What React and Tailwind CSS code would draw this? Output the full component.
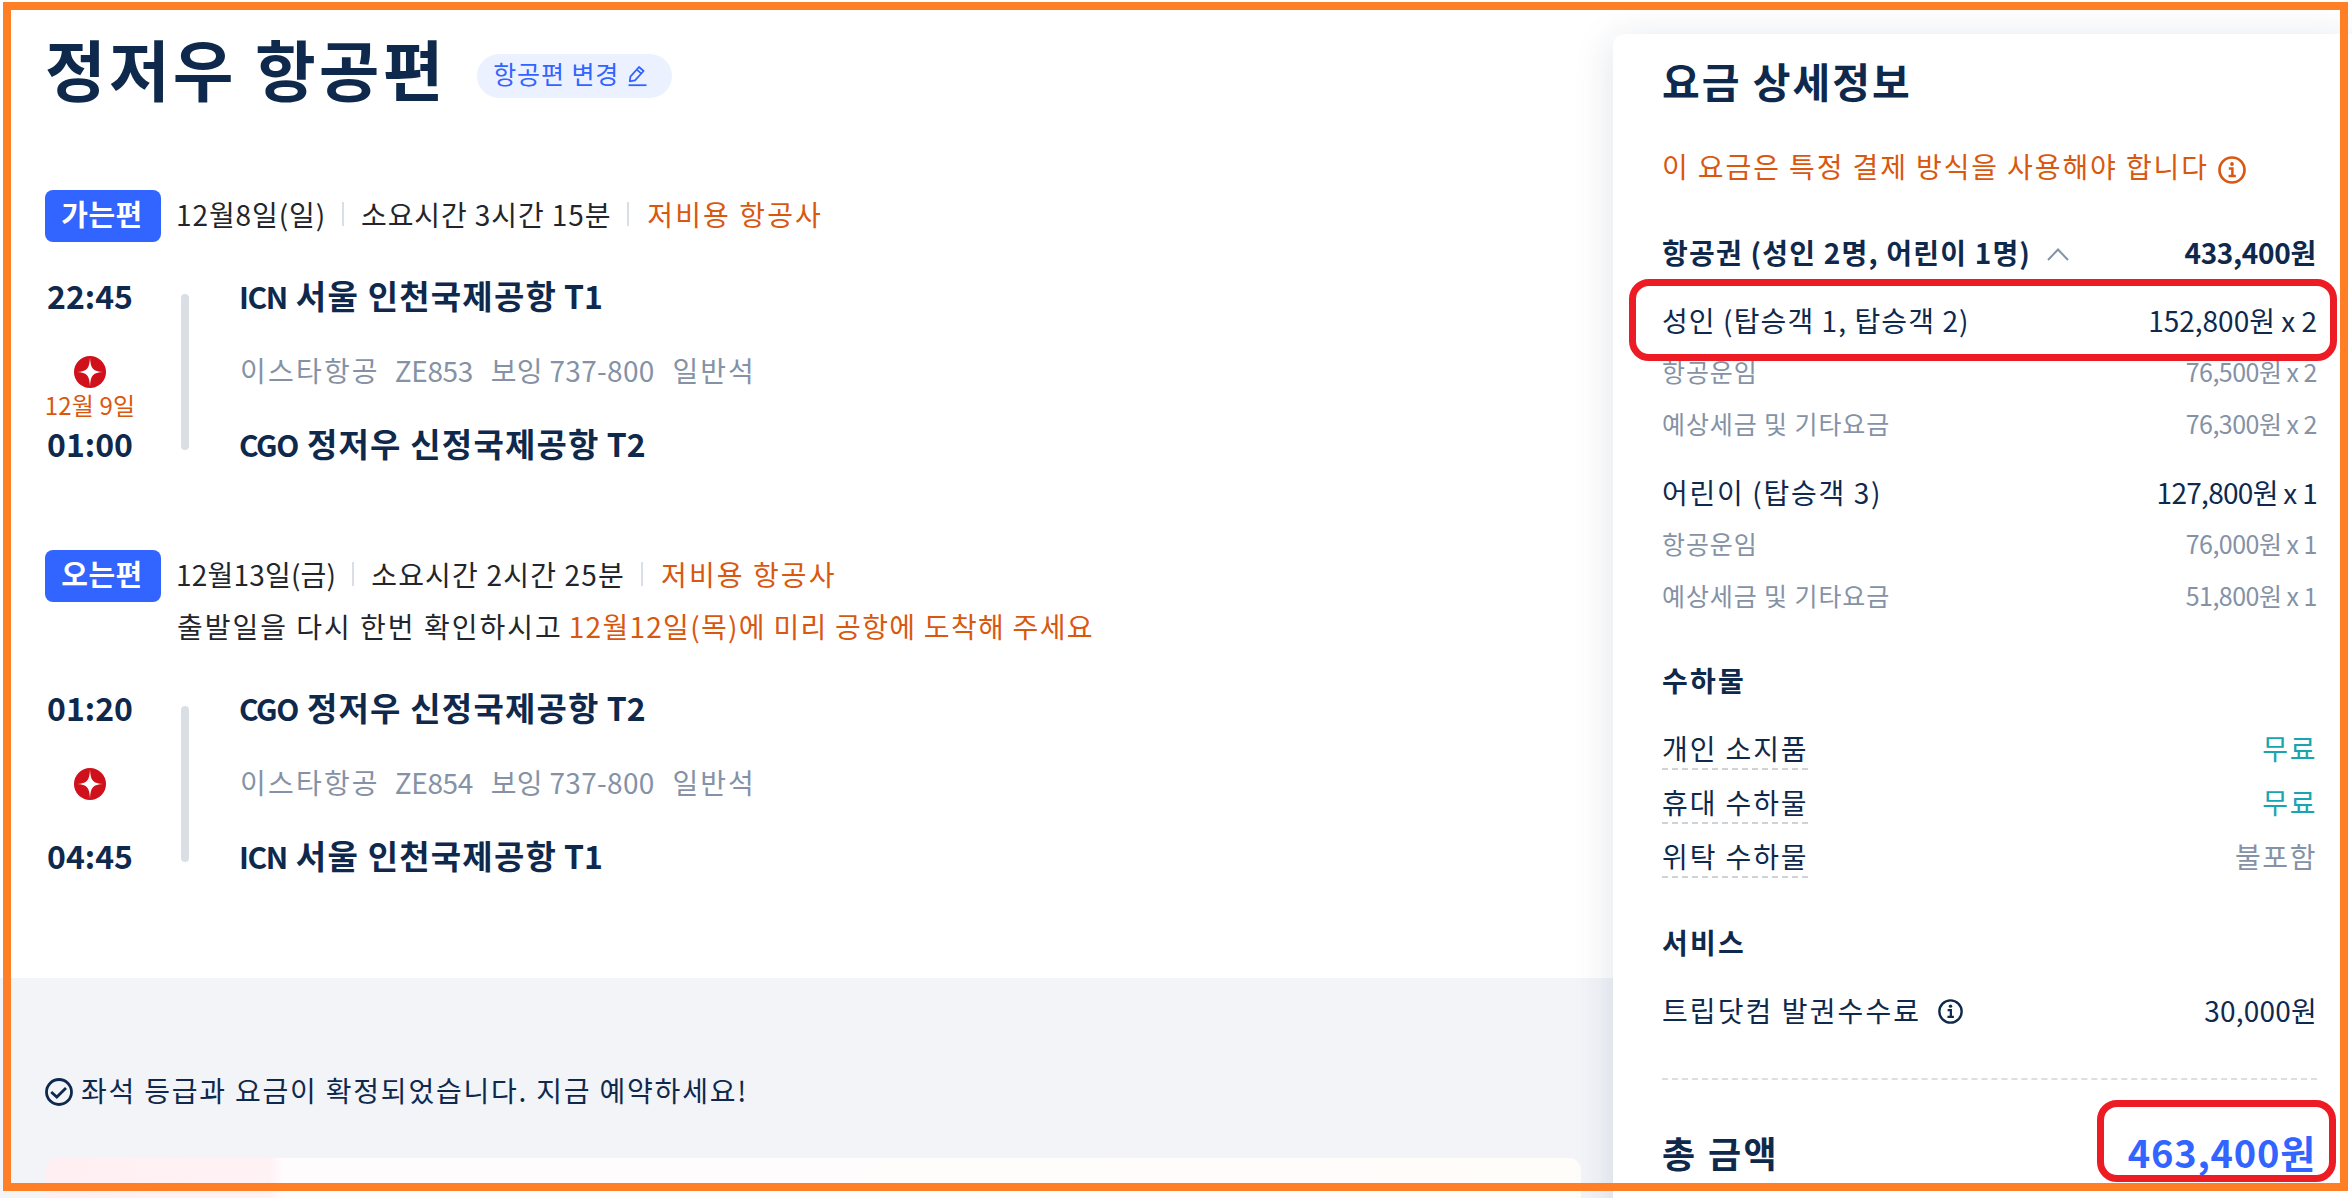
import React from "react";

const incheon = { code: "ICN", name: "서울 인천국제공항", terminal: "T1" };
const zhengzhou = { code: "CGO", name: "정저우 신정국제공항", terminal: "T2" };

const outbound = {
  badge: "가는편",
  date: "12월8일(일)",
  dateClass: "tracking-[0.9px]",
  duration: "소요시간 3시간 15분",
  durationClass: "tracking-[0.9px]",
  departTime: "22:45",
  departAirport: incheon,
  arriveDate: "12월 9일",
  arriveTime: "01:00",
  arriveAirport: zhengzhou,
  flightNo: "ZE853",
};

const inbound = {
  badge: "오는편",
  date: "12월13일(금)",
  dateClass: "tracking-[0.2px]",
  duration: "소요시간 2시간 25분",
  durationClass: "tracking-[1.2px]",
  departTime: "01:20",
  departAirport: zhengzhou,
  arriveTime: "04:45",
  arriveAirport: incheon,
  flightNo: "ZE854",
};

const baggage = [
  { label: "개인 소지품", value: "무료", free: true },
  { label: "휴대 수하물", value: "무료", free: true },
  { label: "위탁 수하물", value: "불포함", free: false },
];

function PencilIcon() {
  return (
    <svg width="22" height="22" viewBox="0 0 22 22" fill="none" stroke="currentColor" strokeWidth="1.8">
      <path d="M2.8 16.4 L3.4 11.6 L12 2 L16.6 6 L8 15.4 Z" strokeLinejoin="round" />
      <path d="M9.8 4.6 L14.4 8.6" />
      <path d="M1.5 20.2 H19.5" />
    </svg>
  );
}

function InfoIcon({ className }) {
  return (
    <svg className={className} viewBox="0 0 28 28" fill="none" stroke="currentColor" strokeWidth="2.7">
      <circle cx="14" cy="14" r="12.5" />
      <path d="M10.8 12.4 H14.4 V20 M10.6 20 H17.8" strokeWidth="2.5" />
      <circle cx="14" cy="8" r="1.9" fill="currentColor" stroke="none" />
    </svg>
  );
}

function CheckIcon() {
  return (
    <svg width="28" height="28" viewBox="0 0 28 28" fill="none" stroke="currentColor" strokeWidth="2.8">
      <circle cx="14" cy="14" r="12.5" />
      <path d="M6.2 14 L11.8 19 L21 10" />
    </svg>
  );
}

function AirlineLogo() {
  return (
    <svg width="32" height="32" viewBox="0 0 32 32">
      <circle cx="16" cy="16" r="16" fill="#d0101b" />
      <path
        d="M16 1.5 C16.5 12.8 19.2 15.4 29 16 C19.2 16.6 16.5 19.2 16 30.5 C15.5 19.2 12.8 16.6 3 16 C12.8 15.4 15.5 12.8 16 1.5 Z"
        fill="#fff"
      />
    </svg>
  );
}

function SegmentHeader({ flight }) {
  return (
    <div className="flex h-[52px] items-center text-[28px] whitespace-nowrap text-[#22262c]">
      <div className="flex h-[52px] w-[116px] items-center justify-center rounded-lg bg-[#3264ff] pr-[2px] pb-[5px] text-[29px] font-bold tracking-[0.5px] text-white">
        {flight.badge}
      </div>
      <span className={`ml-[15px] pb-[5px] ${flight.dateClass}`}>{flight.date}</span>
      <span className="mr-[17px] ml-[16px] mb-[4px] h-6 w-[2px] bg-[#dadfe6]" />
      <span className={`pb-[5px] ${flight.durationClass}`}>{flight.duration}</span>
      <span className="mr-[18px] ml-[16px] mb-[4px] h-6 w-[2px] bg-[#dadfe6]" />
      <span className="pb-[5px] tracking-[2.1px] text-[#d9580f]">저비용 항공사</span>
    </div>
  );
}

function Airport({ airport }) {
  return (
    <div className="flex h-10 items-baseline text-[33px] leading-10 font-bold">
      <span className="text-[30px] tracking-[-1.4px]">{airport.code}</span>
      <span className="ml-[9px] tracking-[1.2px]">{airport.name}</span>
      <span className="ml-[7px] text-[32px]">{airport.terminal}</span>
    </div>
  );
}

function FlightLeg({ flight }) {
  return (
    <div className="flex h-[188px] text-[#0f294d]">
      {/* Times and airline logo */}
      <div className="flex w-[90px] flex-col items-center whitespace-nowrap">
        <div className="h-10 text-[32px] leading-10 font-bold">{flight.departTime}</div>
        <div className="flex h-[108px] flex-col items-center pt-[41px]">
          <AirlineLogo />
          {flight.arriveDate && (
            <div className="mt-[2px] h-[30px] text-[24px] leading-[30px] tracking-[0.2px] text-[#d9580f]">
              {flight.arriveDate}
            </div>
          )}
        </div>
        <div className="h-10 text-[32px] leading-10 font-bold">{flight.arriveTime}</div>
      </div>

      <div className="mt-[19px] ml-[46px] h-[156px] w-2 rounded-full bg-[#dadfe6]" />

      {/* Airports and aircraft */}
      <div className="ml-[50px] flex flex-col whitespace-nowrap">
        <Airport airport={flight.departAirport} />
        <div className="flex h-[108px] items-center pt-px pl-px text-[28px] text-[#8592a6]">
          <span className="tracking-[2.2px]">이스타항공</span>
          <span className="ml-[15px] tracking-[-0.4px]">{flight.flightNo}</span>
          <span className="ml-[18px] tracking-[0.3px]">보잉 737-800</span>
          <span className="ml-[18px] tracking-[1.9px]">일반석</span>
        </div>
        <Airport airport={flight.arriveAirport} />
      </div>
    </div>
  );
}

function PassengerRow({ label, value, className, labelClass, valueClass }) {
  return (
    <div className={`flex items-center justify-between ${className}`}>
      <span className={labelClass}>{label}</span>
      <span className={valueClass}>{value}</span>
    </div>
  );
}

function FareRow({ label, value, className }) {
  return (
    <div className={`flex items-center justify-between pt-[2px] text-[25px] text-[#8592a6] ${className}`}>
      <span className="tracking-[0.9px]">{label}</span>
      <span className="tracking-[-0.5px]">{value}</span>
    </div>
  );
}

function PricePanel() {
  return (
    <aside className="relative mt-[34px] flex h-[1200px] w-[739px] flex-col rounded-tl-xl bg-white pr-[35px] pl-[49px] text-[28px] whitespace-nowrap text-[#0f294d] shadow-[0_6px_40px_rgba(15,41,77,0.13)]">
      <h2 className="h-[94px] text-[41px] leading-[93px] font-bold tracking-[2px]">요금 상세정보</h2>
      <div className="flex h-[76px] items-center text-[#d9580f]">
        <span className="tracking-[1.9px]">이 요금은 특정 결제 방식을 사용해야 합니다</span>
        <InfoIcon className="mt-[7px] ml-[9px] size-[28px]" />
      </div>

      <div className="mt-[18px] flex h-[60px] items-center font-bold">
        <span className="tracking-[1.2px]">항공권 (성인 2명, 어린이 1명)</span>
        <svg className="mt-[4px] ml-[16px]" width="22" height="13" viewBox="0 0 22 13" fill="none" stroke="#8592a6" strokeWidth="2">
          <path d="M1 12 L11 1.5 L21 12" />
        </svg>
        <span className="ml-auto pr-px tracking-[-0.3px]">433,400원</span>
      </div>

      <PassengerRow
        className="h-[75px]"
        label="성인 (탑승객 1, 탑승객 2)"
        labelClass="tracking-[1.1px]"
        value="152,800원 x 2"
      />
      <FareRow className="h-[28px]" label="항공운임" value="76,500원 x 2" />
      <FareRow className="h-[76px]" label="예상세금 및 기타요금" value="76,300원 x 2" />
      <PassengerRow
        className="h-[61px]"
        label="어린이 (탑승객 3)"
        labelClass="tracking-[1.7px]"
        value="127,800원 x 1"
        valueClass="tracking-[-0.7px]"
      />
      <FareRow className="h-[42px]" label="항공운임" value="76,000원 x 1" />
      <FareRow className="h-[62px]" label="예상세금 및 기타요금" value="51,800원 x 1" />

      <h3 className="mt-[14px] h-[80px] leading-[80px] font-bold tracking-[2.2px]">수하물</h3>
      {baggage.map((item) => (
        <div key={item.label} className="flex h-[54px] items-center justify-between">
          <span className="flex h-[50px] items-center self-start border-b-2 border-dashed border-[#cfd3d6] pt-[7px] tracking-[1.9px]">
            {item.label}
          </span>
          <span className={item.free ? "pt-px tracking-[1.6px] text-[#18a5b0]" : "pt-px tracking-[1.6px] text-[#8592a6]"}>
            {item.value}
          </span>
        </div>
      ))}

      <h3 className="mt-[20px] h-[80px] leading-[80px] font-bold tracking-[2.2px]">서비스</h3>
      <div className="flex h-[56px] items-center">
        <span className="tracking-[2.1px]">트립닷컴 발권수수료</span>
        <InfoIcon className="mt-[3px] ml-[17px] size-[25px]" />
        <span className="ml-auto tracking-[0.2px]">30,000원</span>
      </div>

      <div className="mt-[40px] border-t-2 border-dashed border-[#dadfe0]" />
      <div className="flex h-[143px] items-center justify-between font-bold">
        <span className="text-[36px] tracking-[2.4px]">총 금액</span>
        <span className="pr-px text-[38px] tracking-[0.8px] text-[#3264ff]">463,400원</span>
      </div>
    </aside>
  );
}

export default function App() {
  return (
    <div className="relative flex h-[1198px] w-[2352px] overflow-hidden bg-white font-['Noto_Sans_CJK_KR',sans-serif]">
      <main className="flex w-[1613px] flex-col">
        <section className="h-[978px] pl-[45px]">
          <div className="flex h-[134px] items-center whitespace-nowrap">
            <h1 className="-mt-px text-[66px] leading-none font-bold tracking-[3.2px] text-[#0f294d]">정저우 항공편</h1>
            <button className="mt-[18px] ml-[30px] flex h-[44px] w-[195px] items-center justify-center gap-[8px] rounded-full bg-[#ecf1ff] pr-[6px] text-[25px] tracking-[0.9px] text-[#3264ff]">
              <span className="pb-[5px]">항공편 변경</span>
              <PencilIcon />
            </button>
          </div>

          <div className="mt-[56px]">
            <SegmentHeader flight={outbound} />
            <div className="mt-[33px]">
              <FlightLeg flight={outbound} />
            </div>
          </div>

          <div className="mt-[87px]">
            <SegmentHeader flight={inbound} />
            <p className="flex h-[48px] items-center pl-[132px] text-[28px] text-[#22262c]">
              <span className="tracking-[2px]">출발일을 다시 한번 확인하시고</span>
              <span className="ml-[6px] tracking-[1.3px] text-[#d9580f]">12월12일(목)에 미리 공항에 도착해 주세요</span>
            </p>
            <div className="mt-[37px]">
              <FlightLeg flight={inbound} />
            </div>
          </div>
        </section>

        <section className="h-[220px] bg-[#f2f4f8] pr-[32px] pl-[45px]">
          <div className="flex h-[180px] items-end pb-[52px] text-[#0f294d]">
            <CheckIcon />
            <span className="ml-[8px] text-[28px] leading-[31px] tracking-[1.8px]">
              좌석 등급과 요금이 확정되었습니다. 지금 예약하세요!
            </span>
          </div>
          <div className="h-[60px] rounded-xl bg-linear-[90deg,#ffeff3_0px,#fff2f5_225px,#fffcfe_238px,#fffcfd_800px,#fffdfa_1536px]" />
        </section>
      </main>

      <PricePanel />

      {/* Highlight boxes */}
      <div className="absolute top-[279px] left-[1629px] h-[82px] w-[708px] rounded-[20px] border-[7px] border-[#ed1c24]" />
      <div className="absolute top-[1100px] left-[2097px] h-[82px] w-[239px] rounded-[20px] border-[7px] border-[#ed1c24]" />

      {/* Outer frame */}
      <div className="absolute top-[2px] left-[3px] h-[1189px] w-[2345px] border-8 border-[#ff7f27]" />
    </div>
  );
}
